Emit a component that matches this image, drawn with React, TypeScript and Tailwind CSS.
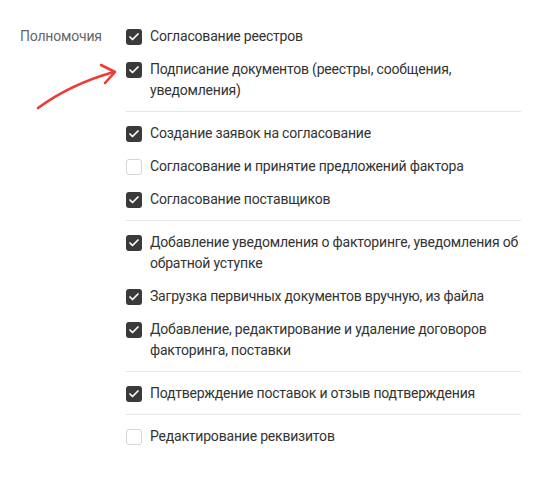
import { Check } from "lucide-react";

type Perm = { label: string; checked: boolean };

const groups: Perm[][] = [
  [
    { label: "Согласование реестров", checked: true },
    { label: "Подписание документов (реестры, сообщения, уведомления)", checked: true },
  ],
  [
    { label: "Создание заявок на согласование", checked: true },
    { label: "Согласование и принятие предложений фактора", checked: false },
    { label: "Согласование поставщиков", checked: true },
  ],
  [
    { label: "Добавление уведомления о факторинге, уведомления об обратной уступке", checked: true },
    { label: "Загрузка первичных документов вручную, из файла", checked: true },
    { label: "Добавление, редактирование и удаление договоров факторинга, поставки", checked: true },
  ],
  [{ label: "Подтверждение поставок и отзыв подтверждения", checked: true }],
  [{ label: "Редактирование реквизитов", checked: false }],
];

function Box({ checked }: { checked: boolean }) {
  return checked ? (
    <span className="mt-[2.5px] flex h-4 w-4 flex-shrink-0 items-center justify-center rounded-[3px] bg-[#3a3a3a]">
      <Check size={12} strokeWidth={3.5} className="text-white" />
    </span>
  ) : (
    <span className="mt-[2.5px] h-4 w-4 flex-shrink-0 rounded-[3px] border border-[#d6d6d6] bg-white" />
  );
}

export default function App() {
  return (
    <div className="relative min-h-[480px] bg-white font-['Roboto','Noto_Sans',sans-serif] text-[14px] leading-[21px] tracking-[-0.2px] text-[#333333]">
      {/* стрелка-пометка */}
      <svg
        className="pointer-events-none absolute left-[30px] top-[60px]"
        width="95"
        height="56"
        viewBox="0 0 95 56"
        fill="none"
      >
        <path
          d="M8 48 C 30 32, 55 20, 84 12"
          stroke="#ee3b34"
          strokeWidth="2.6"
          strokeLinecap="round"
        />
        <path
          d="M71 5 L 85 12 L 75 23"
          stroke="#ee3b34"
          strokeWidth="2.6"
          strokeLinecap="round"
          strokeLinejoin="round"
        />
      </svg>

      <div className="flex pl-5 pr-5 pt-[26px]">
        <div className="w-[106px] flex-shrink-0 text-[#666666]">Полномочия</div>
        <div className="flex-1">
          {groups.map((g, gi) => (
            <div
              key={gi}
              className={[
                "flex flex-col gap-3",
                gi > 0 ? "border-t border-[#e6e6e6] pt-[11px]" : "",
                gi < groups.length - 1 ? "pb-[10px]" : "",
              ].join(" ")}
            >
              {g.map((p) => (
                <label key={p.label} className="flex items-start gap-2">
                  <Box checked={p.checked} />
                  <span>{p.label}</span>
                </label>
              ))}
            </div>
          ))}
        </div>
      </div>
    </div>
  );
}
